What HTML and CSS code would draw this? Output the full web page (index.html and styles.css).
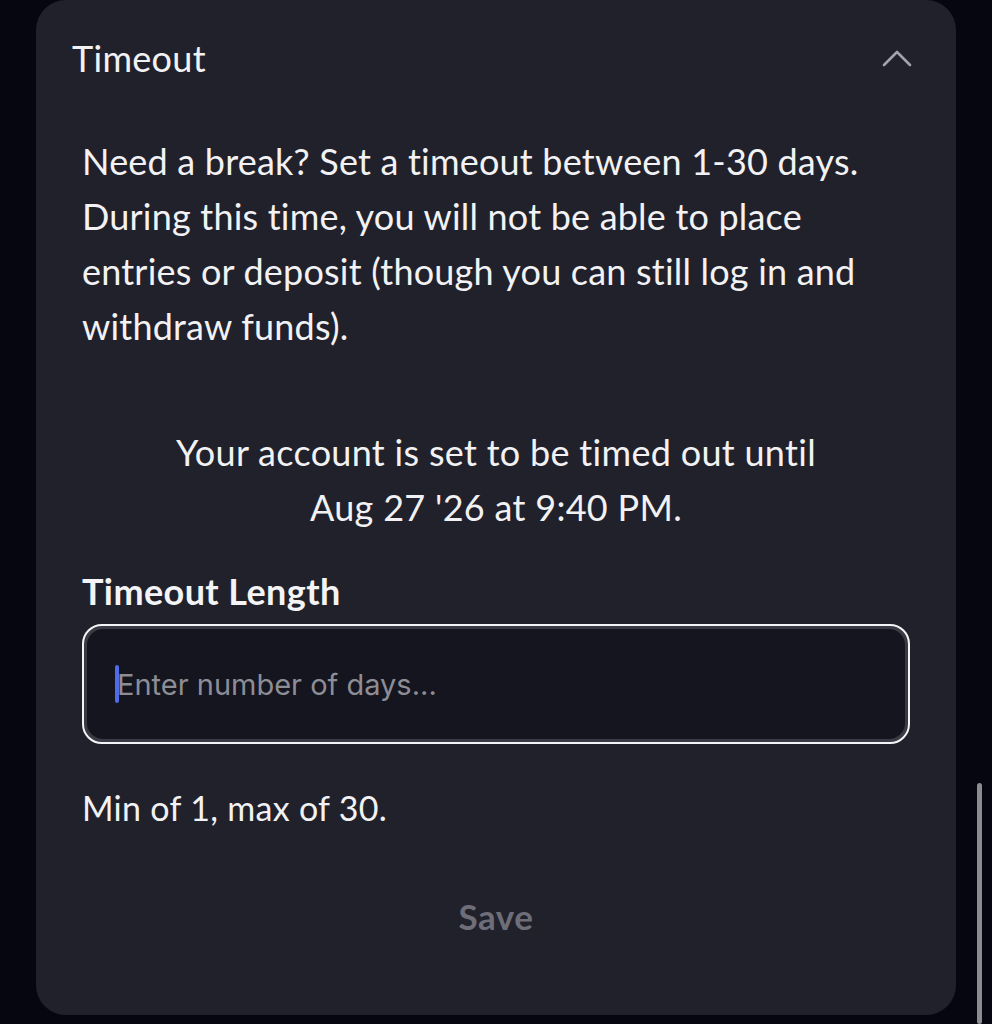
FILE: index.html
```html
<!DOCTYPE html>
<html>
<head>
<meta charset="utf-8">
<link rel="stylesheet" href="styles.css">
</head>
<body>
<div class="page">
  <section class="card">
    <header class="card-head">
      <h2 class="title">Timeout</h2>
      <svg class="chevron" width="30" height="18" viewBox="0 0 30 18"><path d="M2 16 L15 3 L28 16" fill="none" stroke="#a3a3ab" stroke-width="2.6" stroke-linecap="round" stroke-linejoin="round"/></svg>
    </header>
    <div class="card-body">
      <p class="desc">Need a break? Set a timeout between 1-30 days. During this time, you will not be able to place entries or deposit (though you can still log in and withdraw funds).</p>
      <p class="status">Your account is set to be timed out until<br>Aug 27 '26 at 9:40 PM.</p>
      <label class="field-label">Timeout Length</label>
      <div class="input-wrap">
        <div class="input"><span class="caret"></span><span class="placeholder">Enter number of days...</span></div>
      </div>
      <p class="hint">Min of 1, max of 30.</p>
      <div class="actions"><button class="save">Save</button></div>
    </div>
  </section>
  <div class="scrollbar"></div>
</div>
</body>
</html>
```
FILE: styles.css
```css
html, body { margin: 0; padding: 0; }
body {
  background: #05060f;
  width: 992px;
  height: 1024px;
  overflow: hidden;
  font-family: Lato, "Noto Sans", sans-serif;
  color: #f4f4f6;
}
.page {
  position: relative;
  height: 1024px;
  padding: 0 36px;
  box-sizing: border-box;
}
.card {
  background: #21212c;
  border-radius: 30px;
  height: 1015px;
  box-sizing: border-box;
  padding: 0 46px 0 36px;
}
.card-head {
  display: flex;
  align-items: center;
  justify-content: space-between;
  height: 118px;
}
.title {
  margin: 0;
  font-weight: 400;
  font-size: 36px;
  letter-spacing: 0.3px;
  color: #f2f2f4;
  padding-bottom: 2px;
}
.chevron { margin-top: -2px; margin-right: -2px; }
.card-body { padding: 0 0 0 10px; }
.desc {
  margin: 16px 0 0;
  font-size: 36px;
  letter-spacing: 0.2px;
  line-height: 55px;
  color: #f2f2f4;
}
.status {
  margin: 71px 0 0;
  text-align: center;
  font-size: 36px;
  letter-spacing: 0.3px;
  line-height: 55px;
  color: #f2f2f4;
}
.field-label {
  display: block;
  margin-top: 36px;
  font-size: 36px;
  letter-spacing: 0.4px;
  font-weight: 700;
  line-height: 40px;
  color: #f4f4f6;
}
.input-wrap {
  margin-top: 13px;
  border: 2px solid #f4f4f6;
  border-radius: 20px;
  padding: 3px;
  background: #3a3a44;
}
.input {
  height: 110px;
  box-sizing: border-box;
  background: #15151f;
  border-radius: 16px;
  display: flex;
  align-items: center;
  padding-left: 28px;
}
.caret {
  width: 4px;
  height: 38px;
  background: #4f6bea;
  border-radius: 2px;
}
.placeholder {
  font-family: Inter, "Liberation Sans", sans-serif;
  font-size: 29px;
  color: #8d8d96;
  margin-left: -2px;
}
.hint {
  margin: 44px 0 0;
  font-size: 34px;
  letter-spacing: 0.3px;
  line-height: 40px;
  color: #f2f2f4;
}
.actions {
  display: flex;
  justify-content: center;
  margin-top: 68px;
}
.save {
  background: none;
  border: none;
  font-family: Lato, sans-serif;
  font-weight: 700;
  font-size: 35px;
  line-height: 40px;
  letter-spacing: 0.5px;
  color: #6e6e79;
  padding: 0;
}
.scrollbar {
  position: absolute;
  right: 10px;
  top: 783px;
  bottom: 0;
  width: 5px;
  border-radius: 3px;
  background: #8b8b90;
}
```
